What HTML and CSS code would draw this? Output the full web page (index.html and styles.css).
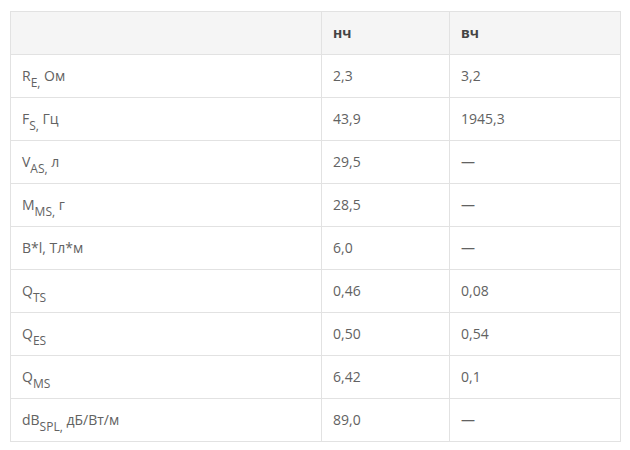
FILE: index.html
```html
<!DOCTYPE html>
<html>
<head>
<meta charset="utf-8">
<link rel="stylesheet" href="styles.css">
</head>
<body>
<table class="specs">
  <colgroup>
    <col class="c1"><col class="c2"><col class="c3">
  </colgroup>
  <thead>
    <tr><th></th><th>нч</th><th>вч</th></tr>
  </thead>
  <tbody>
    <tr><td>R<sub>E,</sub> Ом</td><td>2,3</td><td>3,2</td></tr>
    <tr><td>F<sub>S,</sub> Гц</td><td>43,9</td><td>1945,3</td></tr>
    <tr><td>V<sub>AS,</sub> л</td><td>29,5</td><td>—</td></tr>
    <tr><td>M<sub>MS,</sub> г</td><td>28,5</td><td>—</td></tr>
    <tr><td>B*l, Тл*м</td><td>6,0</td><td>—</td></tr>
    <tr><td>Q<sub>TS</sub></td><td>0,46</td><td>0,08</td></tr>
    <tr><td>Q<sub>ES</sub></td><td>0,50</td><td>0,54</td></tr>
    <tr><td>Q<sub>MS</sub></td><td>6,42</td><td>0,1</td></tr>
    <tr><td>dB<sub>SPL,</sub> дБ/Вт/м</td><td>89,0</td><td>—</td></tr>
  </tbody>
</table>
</body>
</html>
```
FILE: styles.css
```css
html, body {
  margin: 0;
  padding: 0;
  background: #fff;
}
body {
  padding: 11px 0 0 10px;
  font-family: "Open Sans", "Liberation Sans", sans-serif;
  font-size: 14px;
  color: #626262;
}
.specs {
  border-collapse: collapse;
  table-layout: fixed;
  width: 610px;
}
.c1 { width: 311px; }
.c2 { width: 128px; }
.c3 { width: 171px; }
.specs th,
.specs td {
  border: 1px solid #e2e2e2;
  height: 43px;
  padding: 0 0 0 11px;
  box-sizing: border-box;
  text-align: left;
  vertical-align: middle;
  line-height: 18px;
}
.specs th {
  background: #f5f5f5;
  font-weight: 700;
  color: #444;
}
.specs sub {
  font-size: 12px;
  vertical-align: -6px;
  line-height: 0;
}
```
